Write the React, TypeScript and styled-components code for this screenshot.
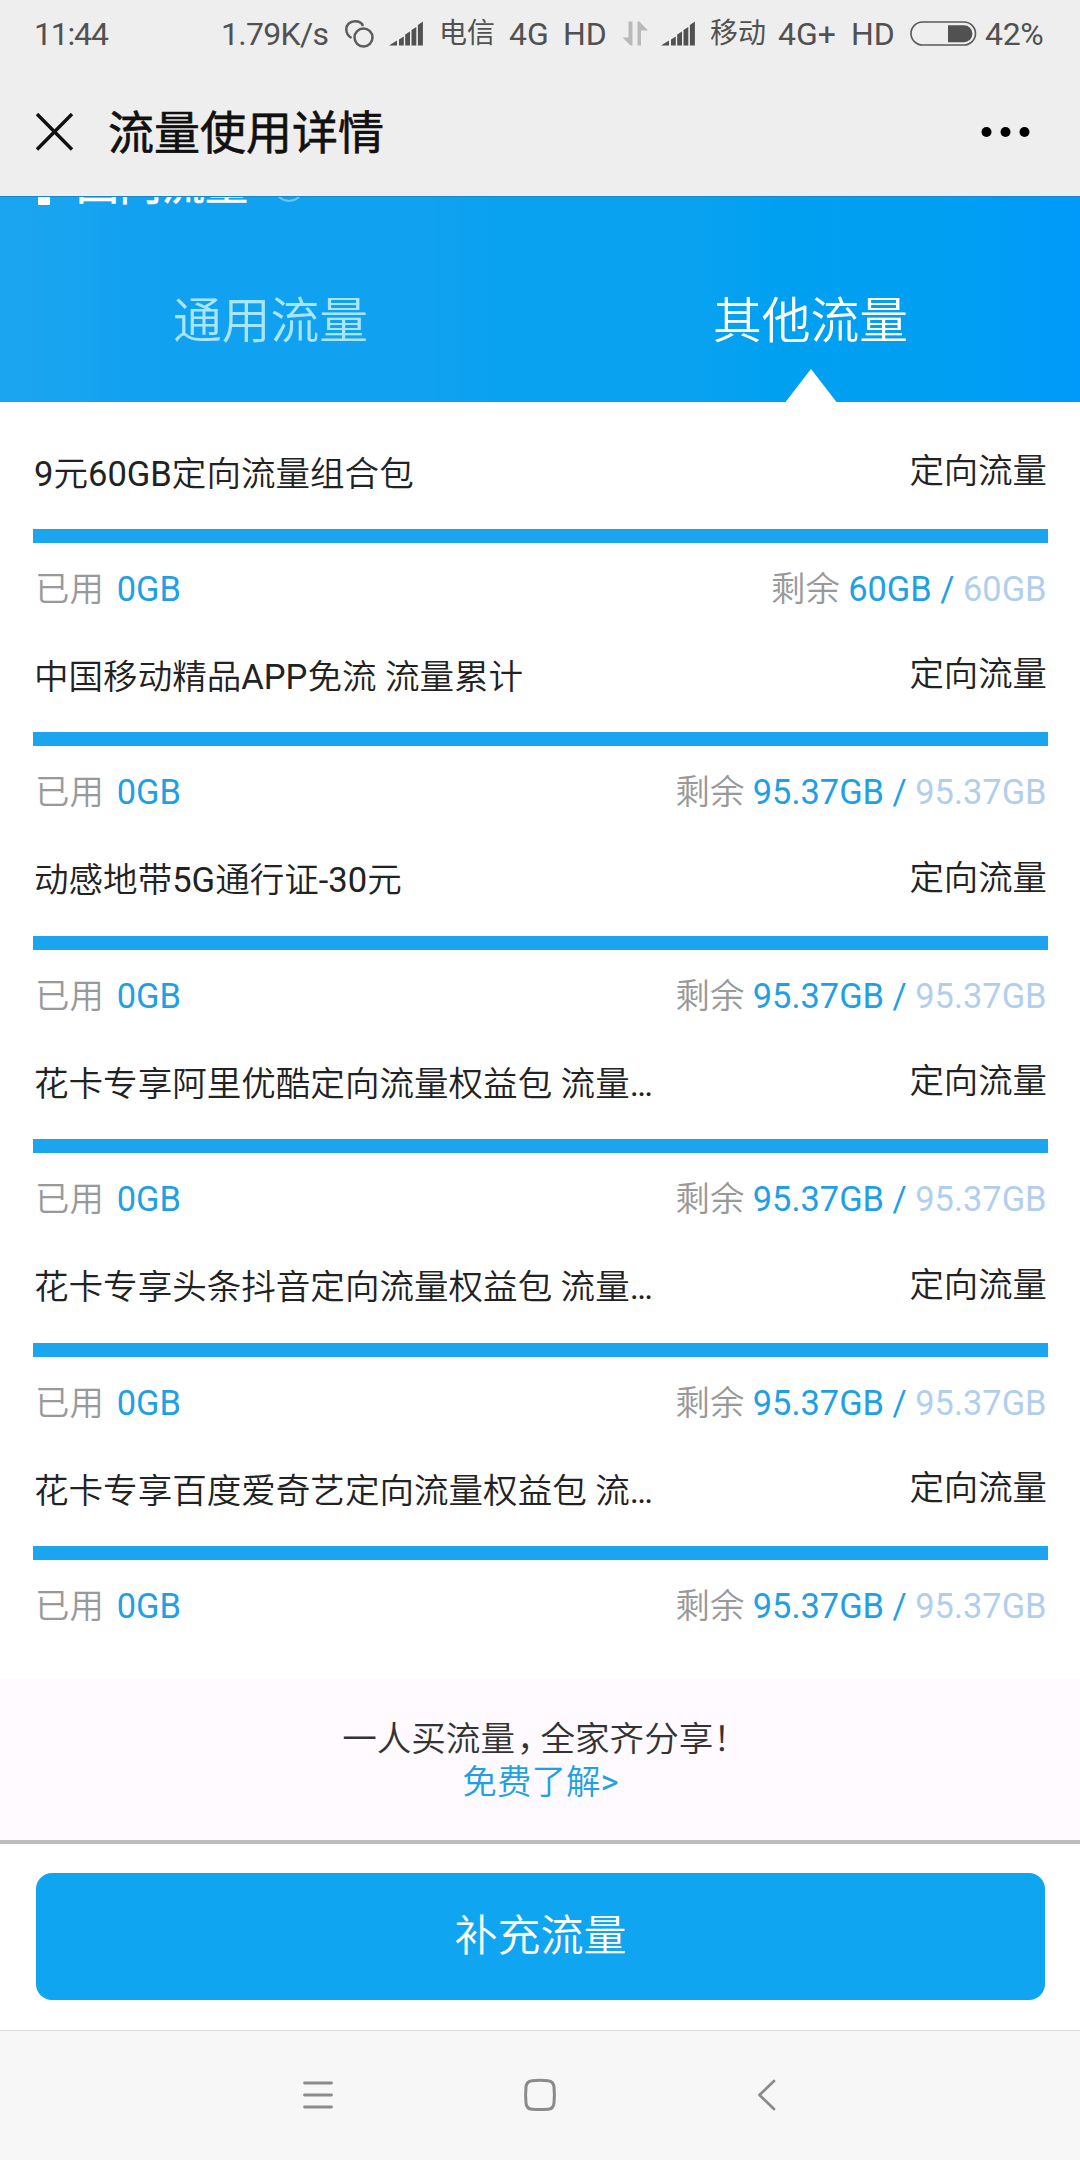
import React from "react";
import styled, { createGlobalStyle } from "styled-components";

const Global = createGlobalStyle`
  * { box-sizing: border-box; }
  body { margin: 0; background: #fff; }
`;

const Screen = styled.div`
  width: 1080px;
  height: 2160px;
  overflow: hidden;
  display: flex;
  flex-direction: column;
  background: #fff;
  font-family: Roboto, "Noto Sans CJK SC", sans-serif;
  font-size: 34.56px;
  line-height: 48px;
  color: #222;
  white-space: nowrap;
`;

const TopArea = styled.header`
  flex: none;
  height: 196px;
  background: #eeeeee;
`;

const StatusBar = styled.div`
  display: flex;
  align-items: center;
  height: 67px;
  padding-left: 34px;
  font-size: 32px;
  color: #515151;
`;

const Slot = styled.span<{ $w: number; $ls?: number; $size?: number }>`
  flex: none;
  width: ${(p) => p.$w}px;
  letter-spacing: ${(p) => p.$ls ?? 0}px;
  font-size: ${(p) => p.$size ?? 32}px;
  display: flex;
  align-items: center;
`;

const TitleBar = styled.div`
  display: flex;
  align-items: center;
  height: 130px;
  padding: 0 50px 0 36px;
  color: #111;
`;

const PageTitle = styled.h1`
  margin: 2px auto 0 34px;
  font-size: 46px;
  font-weight: 400;
  line-height: 60px;
  -webkit-text-stroke: 0.6px #111;
`;

const Hero = styled.section`
  flex: none;
  height: 206px;
  overflow: hidden;
  border-top: 1px solid #1589cd;
  background: linear-gradient(90deg, #1ca4f0 0%, #18a4f0 7%, #11a1f0 12%, #10a1f0 40%, #09a2f0 46%, #08a2f0 65%, #00a0f1 72%, #009ff3 88%, #009cf7 95%, #009afa 100%);
`;

const SectionTitle = styled.div`
  display: flex;
  align-items: flex-end;
  height: 60px;
  margin-top: -52px;
  padding-left: 38px;
  color: #fff;
  font-size: 43px;
  font-weight: 400;
  line-height: 60px;
  -webkit-text-stroke: 0.6px #fff;
`;

const Marker = styled.i`
  width: 12px;
  height: 40px;
  margin-right: 26px;
  background: #fff;
`;

const SectionText = styled.span`
  margin-bottom: -10px;
`;

const InfoRing = styled.i`
  width: 30px;
  height: 30px;
  margin: 0 0 3px 26px;
  border: 2px solid #6cc8f8;
  border-radius: 50%;
`;

const Tabs = styled.nav`
  display: flex;
  height: 197px;
`;

const Tab = styled.button<{ $active?: boolean }>`
  flex: 1;
  display: flex;
  flex-direction: column;
  align-items: center;
  justify-content: flex-end;
  padding: 0 0 0 1px;
  border: 0;
  background: none;
  font: inherit;
  font-size: 48.8px;
  font-weight: 350;
  line-height: 70px;
  color: ${(p) => (p.$active ? "#fff" : "#a9e6fd")};
`;

const Pointer = styled.i<{ $active?: boolean }>`
  width: 51px;
  height: 33px;
  margin: 12px 0 0 1px;
  background: ${(p) => (p.$active ? "#fff" : "transparent")};
  clip-path: polygon(50% 0, 100% 100%, 0 100%);
`;

const List = styled.main`
  flex: none;
  height: 1277px;
  padding: 47px 32.5px 0 33px;
`;

const Item = styled.article`
  height: 203.45px;
`;

const ItemHead = styled.div`
  display: flex;
  justify-content: space-between;
  padding: 0.5px 0.5px 0 1px;
  font-weight: 350;
`;

const Kind = styled.span`
  margin-top: -2.5px;
  margin-bottom: 2.5px;
  font-size: 34.4px;
`;

const Bar = styled.div`
  height: 14px;
  margin: 31.5px 0 22px;
  background: #e3eef6;
`;

const BarFill = styled.div`
  height: 100%;
  background: #1aa5ee;
`;

const ItemFoot = styled.div`
  display: flex;
  justify-content: space-between;
  padding: 0 1px 0 2px;
  font-size: 34.4px;
  font-weight: 350;
  color: #999;
`;

const Used = styled.span`
  display: flex;
  gap: 13px;
`;

const Blue = styled.span`
  font-weight: 400;
  color: #1fa0e5;
`;

const Pale = styled(Blue)`
  color: #b1cfec;
`;

const Latin = styled.span`
  font-weight: 400;
`;

const Promo = styled.section`
  flex: none;
  height: 165px;
  padding-top: 38.5px;
  border-bottom: 4px solid #bdbdbd;
  background: #fefaff;
  text-align: center;
  font-weight: 350;
  line-height: 43.5px;
  color: #333;
`;

const Punct = styled.span<{ $trim: number; $lead?: number }>`
  margin-left: ${(p) => p.$lead ?? 0}px;
  letter-spacing: -${(p) => p.$trim}px;
`;

const PromoLink = styled.div`
  padding-left: 1px;
  color: #1fa0e5;
`;

const Footer = styled.footer`
  flex: none;
  height: 186px;
  padding: 29px 35px 0 36px;
`;

const Recharge = styled.button`
  display: block;
  width: 100%;
  height: 127px;
  padding: 0 0 1px;
  border: 0;
  border-radius: 16px;
  background: #10a5f0;
  color: #fff;
  font: inherit;
  font-size: 43px;
  font-weight: 350;
`;

const NavBar = styled.nav`
  flex: none;
  display: flex;
  align-items: center;
  height: 130px;
  padding: 0 0 2px 302px;
  border-top: 1px solid #dcdcdc;
  background: #f7f7f7;
`;

const NavButton = styled.span<{ $before?: number }>`
  display: flex;
  margin-left: ${(p) => p.$before ?? 0}px;
`;

const Signal = () => (
  <svg width="34" height="25" viewBox="0 0 34 25" fill="#515151">
    <path d="M0 24.5 8 19.5V24.5ZM10 18.5 14.8 15.5V24.5H10ZM16.2 13.5 21 10.500V24.5H16.2ZM22.5 9 27.3 6V24.5H22.5ZM28.900 4 33.900 0.500V24.500H28.900Z" />
  </svg>
);

const Loops = () => (
  <svg width="29" height="28" viewBox="0 0 29 28" fill="none" stroke="#5c5c5c" strokeWidth="2.500">
    <circle cx="18.5" cy="17.5" r="9" />
    <path d="M6.5 18C2.5 15.5 1.300 12.500 1.300 9.500C1.300 4.500 5 1.300 10 1.300C14 1.300 17 3 18 6" />
  </svg>
);

const DataArrows = () => (
  <svg width="26" height="25" viewBox="0 0 26 25" fill="#b9b9b9">
    <path d="M6.500 0.500H10.500V24.500H8.500L0.500 16.500H6.500ZM15.500 0.500H17.500L26 9.500H19V24.500H15.500Z" />
  </svg>
);

const Battery = () => (
  <svg width="67" height="26" viewBox="0 0 67 26">
    <rect x="1" y="1" width="64.500" height="23" rx="11.500" fill="none" stroke="#5a5a5a" strokeWidth="1.600" />
    <path d="M38 4.300H54A8.400 8.400 0 0 1 54 21.200H38Z" fill="#515151" />
  </svg>
);

const CloseIcon = () => (
  <svg width="38" height="38" viewBox="0 0 38 38" stroke="#111" strokeWidth="3.400">
    <path d="M1 1 36 36.500M36 1 1 36.500" />
  </svg>
);

const MoreIcon = () => (
  <svg width="49" height="12" viewBox="0 0 49 12" fill="#000">
    <circle cx="5.500" cy="6" r="5" />
    <circle cx="24.500" cy="6" r="5" />
    <circle cx="43.500" cy="6" r="5" />
  </svg>
);

const MenuIcon = () => (
  <svg width="32" height="32" viewBox="0 0 32 32" stroke="#8b8b8b" strokeWidth="2.800" strokeLinecap="round">
    <path d="M2.500 4H29.500M2.500 16H29.500M2.500 28H29.500" />
  </svg>
);

const HomeIcon = () => (
  <svg width="34" height="34" viewBox="0 0 34 34" fill="none" stroke="#8b8b8b" strokeWidth="3">
    <path d="M9 2.700Q17 1.700 25 2.700Q30.500 3.200 31 9Q31.800 17 31 25Q30.500 30.800 25 31.200Q17 32 9 31.200Q3.500 30.800 3 25Q2.200 17 3 9Q3.500 3.200 9 2.700Z" />
  </svg>
);

const BackIcon = () => (
  <svg width="20" height="34" viewBox="0 0 20 34" fill="none" stroke="#8b8b8b" strokeWidth="2.800" strokeLinecap="round" strokeLinejoin="round">
    <path d="M17 3 2.500 17 17 31" />
  </svg>
);

interface Plan {
  name: string;
  left: string;
  total: string;
}

const plans: Plan[] = [
  { name: "9元60GB定向流量组合包", left: "60GB", total: "60GB" },
  { name: "中国移动精品APP免流 流量累计", left: "95.37GB", total: "95.37GB" },
  { name: "动感地带5G通行证-30元", left: "95.37GB", total: "95.37GB" },
  { name: "花卡专享阿里优酷定向流量权益包 流量…", left: "95.37GB", total: "95.37GB" },
  { name: "花卡专享头条抖音定向流量权益包 流量…", left: "95.37GB", total: "95.37GB" },
  { name: "花卡专享百度爱奇艺定向流量权益包 流…", left: "95.37GB", total: "95.37GB" },
];

const PlanName = ({ text }: { text: string }) => (
  <span>
    {text.split(/([\x21-\x7e…]+)/).map((part, i) => (i % 2 ? <Latin key={i}>{part}</Latin> : part))}
  </span>
);

const PlanItem = ({ plan }: { plan: Plan }) => (
  <Item>
    <ItemHead>
      <PlanName text={plan.name} />
      <Kind>定向流量</Kind>
    </ItemHead>
    <Bar>
      <BarFill style={{ width: `${(parseFloat(plan.left) / parseFloat(plan.total)) * 100}%` }} />
    </Bar>
    <ItemFoot>
      <Used>
        <span>已用</span>
        <Blue>0GB</Blue>
      </Used>
      <span>
        剩余 <Blue>{plan.left} / </Blue>
        <Pale>{plan.total}</Pale>
      </span>
    </ItemFoot>
  </Item>
);

export default function App() {
  return (
    <Screen>
      <Global />
      <TopArea>
        <StatusBar>
          <Slot $w={187} $ls={-1.2}>11:44</Slot>
          <Slot $w={124} $ls={-0.7}>1.79K/s</Slot>
          <Slot $w={44}><Loops /></Slot>
          <Slot $w={50}><Signal /></Slot>
          <Slot $w={70} $size={28}>电信</Slot>
          <Slot $w={54}>4G</Slot>
          <Slot $w={59}>HD</Slot>
          <Slot $w={39}><DataArrows /></Slot>
          <Slot $w={49}><Signal /></Slot>
          <Slot $w={68} $size={28}>移动</Slot>
          <Slot $w={73}>4G+</Slot>
          <Slot $w={59}>HD</Slot>
          <Slot $w={75}><Battery /></Slot>
          <Slot $w={64} $ls={-0.3}>42%</Slot>
        </StatusBar>
        <TitleBar>
          <CloseIcon />
          <PageTitle>流量使用详情</PageTitle>
          <MoreIcon />
        </TitleBar>
      </TopArea>
      <Hero>
        <SectionTitle>
          <Marker />
          <SectionText>国内流量</SectionText>
          <InfoRing />
        </SectionTitle>
        <Tabs>
          <Tab>
            通用流量
            <Pointer />
          </Tab>
          <Tab $active>
            其他流量
            <Pointer $active />
          </Tab>
        </Tabs>
      </Hero>
      <List>
        {plans.map((plan) => (
          <PlanItem key={plan.name} plan={plan} />
        ))}
      </List>
      <Promo>
        <div>
          一人买流量<Punct $trim={11} $lead={2}>，</Punct>全家齐分享<Punct $trim={10}>！</Punct>
        </div>
        <PromoLink>免费了解<Latin>&gt;</Latin></PromoLink>
      </Promo>
      <Footer>
        <Recharge>补充流量</Recharge>
      </Footer>
      <NavBar>
        <NavButton><MenuIcon /></NavButton>
        <NavButton $before={189}><HomeIcon /></NavButton>
        <NavButton $before={200}><BackIcon /></NavButton>
      </NavBar>
    </Screen>
  );
}
